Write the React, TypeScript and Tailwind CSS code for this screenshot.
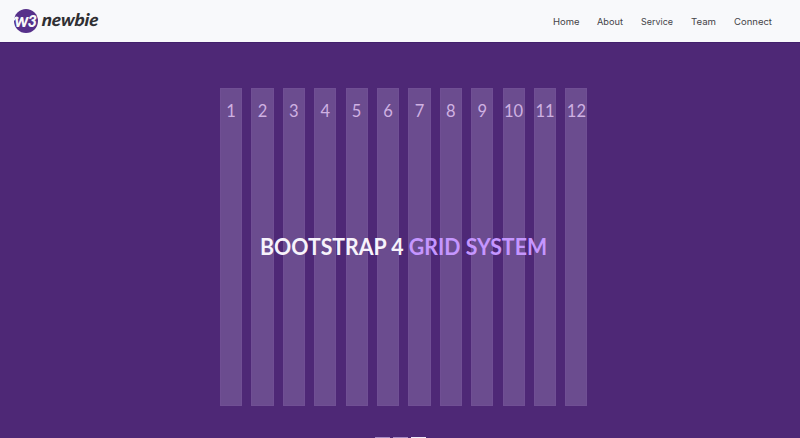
const links = [
  { label: 'Home', width: 26.5 },
  { label: 'About', width: 26 },
  { label: 'Service', width: 32 },
  { label: 'Team', width: 25 },
  { label: 'Connect', width: 38 },
];
const columns = Array.from({ length: 12 }, (_, i) => i + 1);

function Logo() {
  return (
    <svg width="90" height="30" viewBox="0 0 90 30" className="block" aria-label="w3newbie">
      <circle cx="12" cy="15" r="12" fill="#56308a" />
      <path d="M0 14 Q2 10 4 12" fill="none" stroke="#f8f9fa" strokeWidth="1.6" strokeLinecap="round" />
      <text x="0.5" y="21" textLength="14" lengthAdjust="spacingAndGlyphs" fontSize="19" fontWeight="900" fontStyle="italic" fill="#f8f9fa" className="font-['Lato',sans-serif]">w</text>
      <text x="13.5" y="21" textLength="9.5" lengthAdjust="spacingAndGlyphs" fontSize="17.5" fontWeight="900" fontStyle="italic" fill="#f8f9fa" className="font-['Lato',sans-serif]">3</text>
      <g transform="translate(27.5 20) skewX(-5)">
        <text x="0" y="0" textLength="56.5" lengthAdjust="spacingAndGlyphs" fontSize="17.5" fontWeight="900" fontStyle="italic" fill="#303033" className="font-['Lato',sans-serif]">newbie</text>
      </g>
    </svg>
  );
}

export default function App() {
  return (
    <div className="flex h-[438px] w-[800px] flex-col overflow-hidden bg-[#4e2876] font-['Lato',sans-serif]">
      <header className="flex h-[42px] shrink-0 items-center justify-between bg-[#f8f9fb] pr-7 pl-[14px]">
        <Logo />
        <nav className="flex gap-[18px]">
          {links.map((l) => (
            <a key={l.label} href="#" className="block">
              <svg width={l.width} height="14" className="block overflow-visible">
                <text x="0" y="10.7" textLength={l.width} lengthAdjust="spacingAndGlyphs" fontSize="9" fill="#444448" className="font-['Inter',sans-serif]">{l.label}</text>
              </svg>
            </a>
          ))}
        </nav>
      </header>
      <main className="flex min-h-0 flex-1 flex-col border-t border-[#42206c] pt-[45px]">
        <section className="ml-[220px] grid w-[367.5px] grid-cols-1">
          <div className="col-start-1 row-start-1 flex h-[318px] justify-between">
            {columns.map((n) => (
              <div key={n} className="flex w-[22.2px] justify-center border border-[#704f94] bg-[#6b4c8f] pt-[11px] text-[16.5px] leading-[22px] text-[#cfb1e2]">
                <span>{n}</span>
              </div>
            ))}
          </div>
          <h1 className="z-10 col-start-1 row-start-1 ml-[40px] self-center">
            <svg width="288" height="30" className="block overflow-visible">
              <text x="0" y="23" fontSize="22" fontWeight="700" textLength="287" lengthAdjust="spacingAndGlyphs" fill="#f7f3fb">
                BOOTSTRAP 4 <tspan fill="#c596ff">GRID SYSTEM</tspan>
              </text>
            </svg>
          </h1>
        </section>
        <div className="mt-auto flex justify-center gap-[3px]">
          <span className="h-px w-[15px] bg-[#a98bc4]" />
          <span className="h-px w-[15px] bg-[#a98bc4]" />
          <span className="h-px w-[15px] bg-[#f1e9f8]" />
        </div>
      </main>
    </div>
  );
}
